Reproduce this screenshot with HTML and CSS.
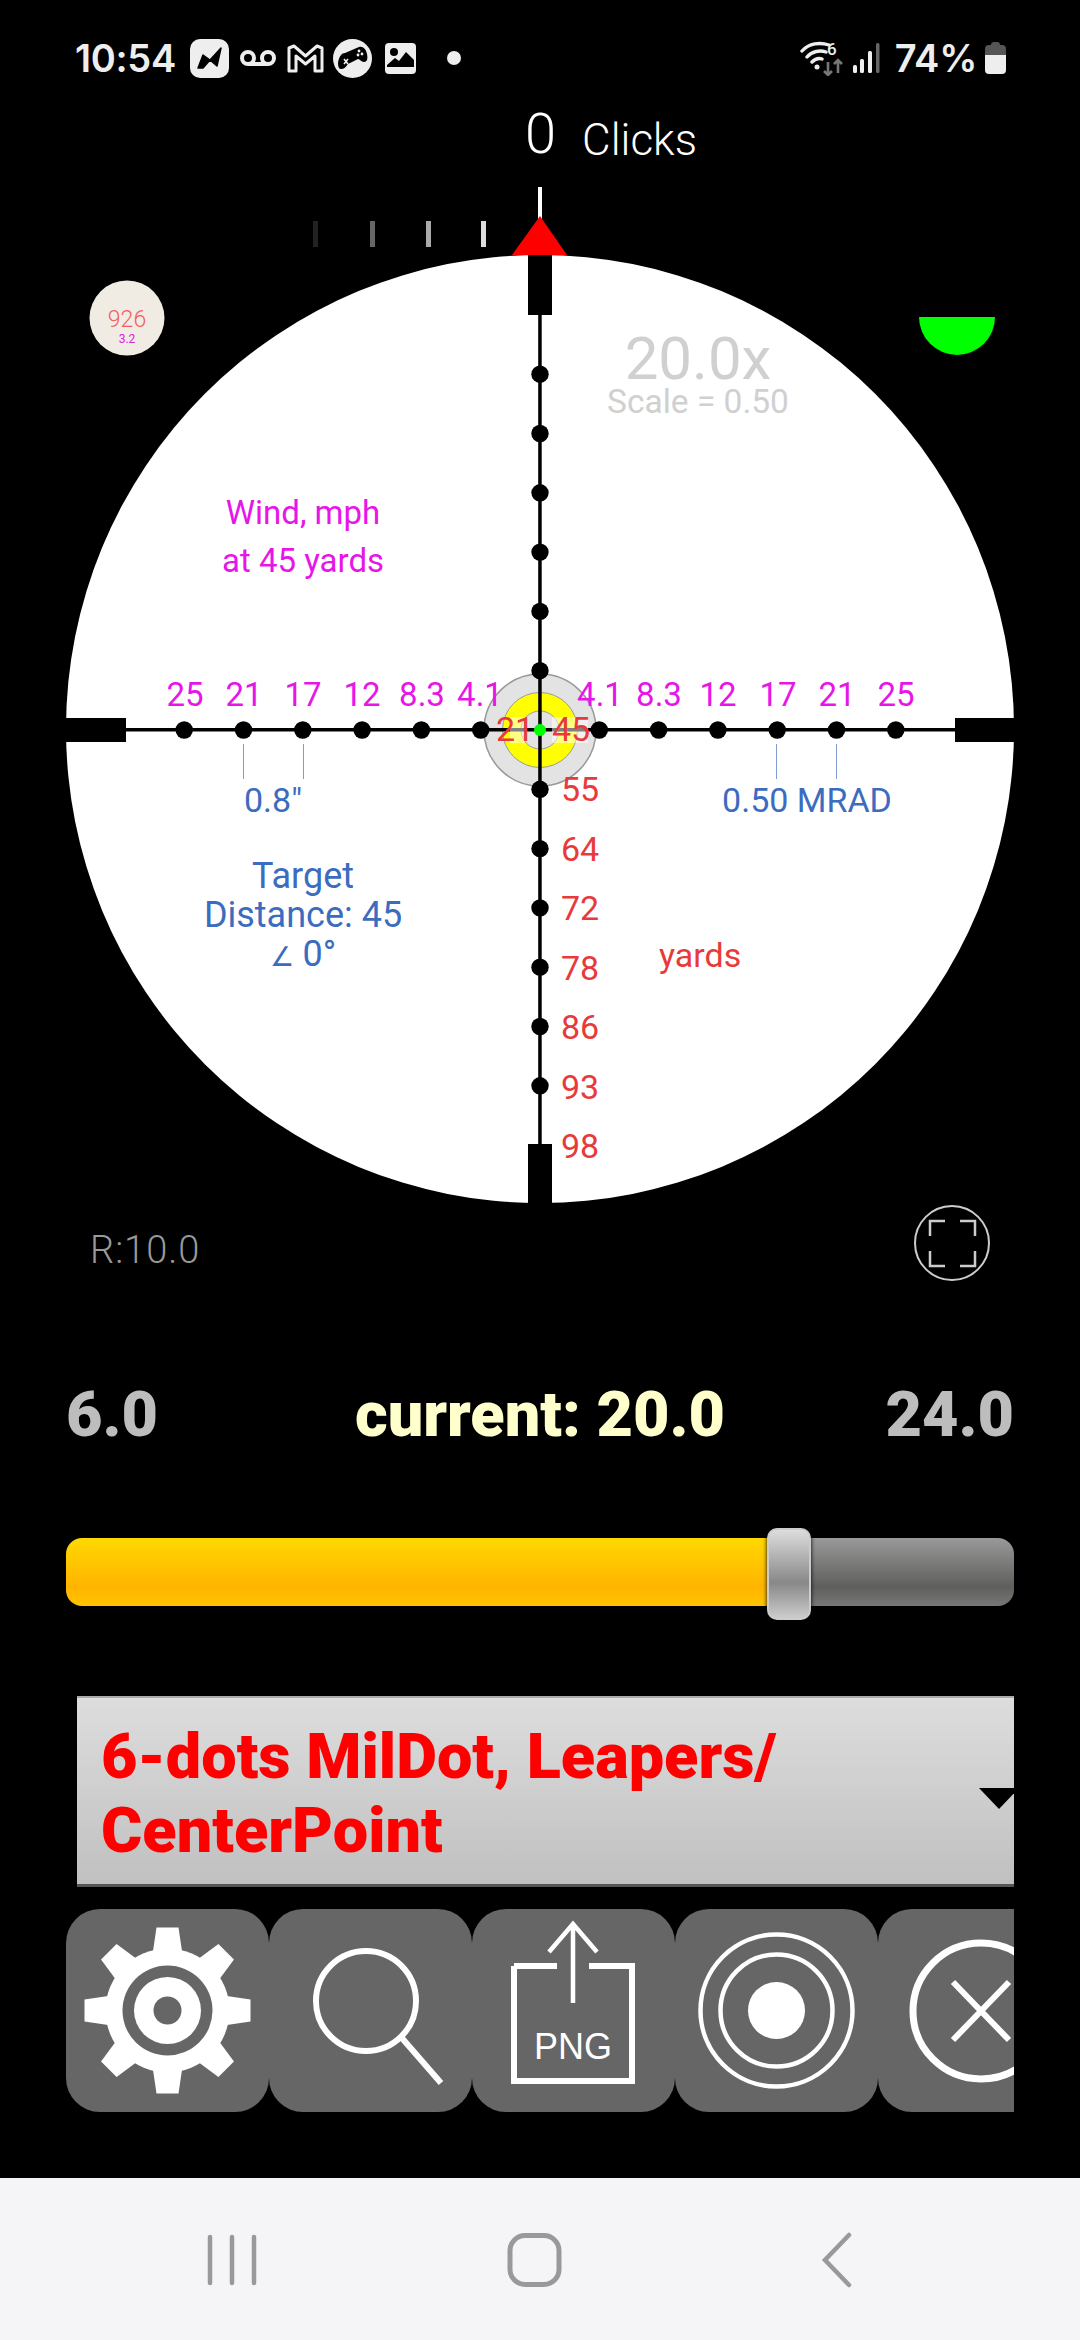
FILE: index.html
```html
<!DOCTYPE html>
<html>

<head>
    <meta charset="utf-8">
    <link rel="stylesheet" href="styles.css">
    <title>Scope</title>
</head>

<body>
    <div class="app">

        <!-- status bar -->
        <div class="status">
            <div class="status-left">
                <span class="time">10:54</span>
                <svg class="ic ic-n" width="39" height="39" viewBox="0 0 39 39">
                    <rect width="39" height="39" rx="10" fill="#eee" />
                    <path d="M8 29 L13 16 L20 21 L31 9 L27 27 L20 21 L13 29 Z" fill="#000" stroke="#000" stroke-width="1.5" stroke-linejoin="round" />
                </svg>
                <svg class="ic ic-vm" width="36" height="20" viewBox="0 0 36 20">
                    <circle cx="8" cy="10" r="6" fill="none" stroke="#eee" stroke-width="4" />
                    <circle cx="28" cy="10" r="6" fill="none" stroke="#eee" stroke-width="4" />
                    <path d="M8 16H28" stroke="#eee" stroke-width="4" />
                </svg>
                <svg class="ic ic-m" width="37" height="29" viewBox="0 0 37 29">
                    <path d="M2 4 L7 2 L18.5 12 L30 2 L35 4 V27 H28 V12 L18.5 20 L9 12 V27 H2 Z" fill="none" stroke="#eee" stroke-width="3" stroke-linejoin="round" />
                </svg>
                <svg class="ic ic-game" width="39" height="39" viewBox="0 0 39 39">
                    <circle cx="19.5" cy="19.5" r="19.5" fill="#eee" />
                    <path d="M5 24 C6 17 9 14 12 14 L26 8 C30 7 33 10 34 15 C35 20 34 23 31 23 C28 23 27 20 25 20 L15 25 C13 28 11 30 8 30 C6 30 5 28 5 24 Z" fill="#000" />
                    <path d="M11 20 L15 25 M15 20 L11 25" stroke="#eee" stroke-width="1.6" />
                    <circle cx="26" cy="12" r="1.4" fill="#eee" />
                    <circle cx="29" cy="15" r="1.4" fill="#eee" />
                    <circle cx="25" cy="16" r="1.4" fill="#eee" />
                </svg>
                <svg class="ic ic-img" width="31" height="31" viewBox="0 0 31 31">
                    <rect width="31" height="31" rx="4" fill="#eee" />
                    <circle cx="9" cy="9" r="4" fill="#000" />
                    <path d="M2 22 L10 15 L14 18 L21 9 L29 17 V24 H2 Z" fill="#000" />
                </svg>
                <span class="status-dot"></span>
            </div>
            <div class="status-right">
                <svg class="ic" width="46" height="36" viewBox="0 0 46 36">
                    <path d="M2 11 C9 3 20 2 29 5 M7 17 C12 11 20 10 26 12 M12 22 C15 19 19 18 22 19" fill="none" stroke="#eee" stroke-width="3.4" stroke-linecap="round" />
                    <circle cx="17" cy="27" r="2.5" fill="#eee" />
                    <path d="M28 22V35 M24 31L28 35L32 31" fill="none" stroke="#777" stroke-width="2.6" />
                    <path d="M38 33V20 M34 24L38 20L42 24" fill="none" stroke="#777" stroke-width="2.6" />
                    <text class="wifi-six" x="27" y="15">6</text>
                </svg>
                <svg class="ic signal" width="27" height="30" viewBox="0 0 27 30">
                    <rect x="0" y="22" width="4" height="8" rx="1.5" fill="#eee" />
                    <rect x="7" y="16" width="4" height="14" rx="1.5" fill="#eee" />
                    <rect x="15" y="8" width="4" height="22" rx="1.5" fill="#eee" />
                    <rect x="23" y="0" width="3.5" height="30" rx="1.5" fill="#666" />
                </svg>
                <span class="percent">74%</span>
                <svg class="ic ic-batt" width="21" height="32" viewBox="0 0 21 32">
                    <path d="M6 3 Q6 0 9 0 H12 Q15 0 15 3 H17 Q21 3 21 7 V13 H0 V7 Q0 3 4 3 Z" fill="#555" />
                    <path d="M0 13 H21 V28 Q21 32 17 32 H4 Q0 32 0 28 Z" fill="#eee" />
                </svg>
            </div>
        </div>

        <div class="clicks"><span class="clicks-num">0</span><span class="clicks-label">Clicks</span></div>

        <!-- scope view, viewBox keeps screen coordinates -->
        <svg class="scope" width="1080" height="1120" viewBox="0 170 1080 1120">
            <rect class="wht" x="538" y="187" width="4" height="32" />
            <rect x="313" y="221" width="5" height="26" fill="#222" />
            <rect x="370" y="221" width="5" height="26" fill="#666" />
            <rect x="426" y="221" width="5" height="26" fill="#aaa" />
            <rect x="481" y="221" width="5" height="26" fill="#ddd" />
            <polygon points="540,216 567,255 512,255" fill="#f00" />

            <circle class="wht" cx="540" cy="729" r="474" />

            <!-- badge and level -->
            <circle cx="127" cy="318" r="37.5" fill="#f0ece4" />
            <text class="badge-top" x="127" y="327">926</text>
            <text class="badge-sub" x="127" y="343">3.2</text>
            <path d="M919 317 H995 A38 38 0 0 1 919 317 Z" fill="#0f0" />

            <text class="power" x="698" y="379">20.0x</text>
            <text class="scale" x="698" y="413">Scale = 0.50</text>

            <!-- center target -->
            <circle cx="540" cy="730" r="56" fill="#e3e3e3" stroke="#999" stroke-width="1.5" />
            <circle cx="540" cy="730" r="37.5" fill="#ff0" stroke="#999" stroke-width="1" />
            <circle cx="540" cy="730" r="19" fill="#e3e3e3" stroke="#999" stroke-width="1" />

            <!-- crosshair -->
            <rect x="66" y="728" width="948" height="3.5" />
            <rect x="538.2" y="255" width="3.5" height="948" />
            <rect x="528" y="255" width="24" height="60" />
            <rect x="528" y="1144" width="24" height="60" />
            <rect x="66" y="718" width="60" height="24" />
            <rect x="955" y="718" width="59" height="24" />

            <!-- dots -->
            <circle cx="184.200" cy="730" r="8.7" />
            <circle cx="243.500" cy="730" r="8.7" />
            <circle cx="302.800" cy="730" r="8.7" />
            <circle cx="362.100" cy="730" r="8.7" />
            <circle cx="421.400" cy="730" r="8.7" />
            <circle cx="480.700" cy="730" r="8.7" />
            <circle cx="599.300" cy="730" r="8.7" />
            <circle cx="658.600" cy="730" r="8.7" />
            <circle cx="717.900" cy="730" r="8.7" />
            <circle cx="777.200" cy="730" r="8.7" />
            <circle cx="836.500" cy="730" r="8.7" />
            <circle cx="895.800" cy="730" r="8.7" />
            <circle cx="540" cy="374.200" r="8.7" />
            <circle cx="540" cy="433.500" r="8.7" />
            <circle cx="540" cy="492.800" r="8.7" />
            <circle cx="540" cy="552.100" r="8.7" />
            <circle cx="540" cy="611.400" r="8.7" />
            <circle cx="540" cy="670.700" r="8.7" />
            <circle cx="540" cy="789.300" r="8.7" />
            <circle cx="540" cy="848.600" r="8.7" />
            <circle cx="540" cy="907.900" r="8.7" />
            <circle cx="540" cy="967.200" r="8.7" />
            <circle cx="540" cy="1026.500" r="8.7" />
            <circle cx="540" cy="1085.800" r="8.7" />
            <circle cx="540" cy="730" r="6" fill="#0f0" />

            <!-- wind -->
            <text class="mag mid" x="303" y="524">Wind, mph</text>
            <text class="mag mid" x="303" y="572">at 45 yards</text>
            <text class="mag mid" x="185" y="706">25</text>
            <text class="mag mid" x="244" y="706">21</text>
            <text class="mag mid" x="303" y="706">17</text>
            <text class="mag mid" x="362" y="706">12</text>
            <text class="mag mid" x="422" y="706">8.3</text>
            <text class="mag mid" x="480" y="706">4.1</text>
            <text class="mag mid" x="600" y="706">4.1</text>
            <text class="mag mid" x="659" y="706">8.3</text>
            <text class="mag mid" x="718" y="706">12</text>
            <text class="mag mid" x="778" y="706">17</text>
            <text class="mag mid" x="837" y="706">21</text>
            <text class="mag mid" x="896" y="706">25</text>

            <!-- scale marks -->
            <rect class="tick" x="243" y="744" width="1" height="35" />
            <rect class="tick" x="303" y="744" width="1" height="35" />
            <rect class="tick" x="776" y="744" width="1" height="35" />
            <rect class="tick" x="836" y="744" width="1" height="35" />
            <text class="blue mid" x="273" y="812">0.8"</text>
            <text class="blue mid" x="807" y="812">0.50 MRAD</text>
            <text class="blue big mid" x="303" y="888">Target</text>
            <text class="blue big mid" x="303" y="927">Distance: 45</text>
            <text class="blue big mid" x="303" y="966"><tspan class="angle">∠</tspan> 0°</text>

            <!-- range -->
            <rect class="veil" x="510" y="717" width="15" height="26" />
            <rect class="veil" x="552" y="717" width="36" height="26" />
            <text class="red" x="496" y="741">21</text>
            <text class="red" x="552" y="741">45</text>
            <text class="red" x="561" y="801">55</text>
            <text class="red" x="561" y="861">64</text>
            <text class="red" x="561" y="920">72</text>
            <text class="red" x="561" y="980">78</text>
            <text class="red" x="561" y="1039">86</text>
            <text class="red" x="561" y="1099">93</text>
            <text class="red" x="561" y="1158">98</text>
            <text class="red" x="659" y="967">yards</text>

            <text class="reticle-r" x="90" y="1263">R:10.0</text>

            <!-- fullscreen button -->
            <circle cx="952" cy="1243" r="37" fill="none" stroke="#ccc" stroke-width="2" />
            <path class="corners" d="M930 1236V1221H945 M960 1221H975V1236 M930 1251V1266H945 M960 1266H975V1251" />
        </svg>

        <div class="power-row">
            <span class="power-end">6.0</span>
            <span class="power-now">current: 20.0</span>
            <span class="power-end power-max">24.0</span>
        </div>

        <div class="slider">
            <div class="slider-fill"></div>
            <div class="slider-rest"></div>
            <div class="slider-thumb"></div>
        </div>

        <div class="select">
            <div class="select-text">6-dots MilDot, Leapers/<br>CenterPoint</div>
            <div class="select-arrow"></div>
        </div>

        <div class="tools">
            <div class="tool">
                <svg width="203" height="203" viewBox="-101.500 -101.500 203 203">
                    <g fill="#fff">
                        <circle r="62" />
                        <polygon points="-11,-83 11,-83 15,-56 -15,-56" />
                        <polygon points="-11,-83 11,-83 15,-56 -15,-56" transform="rotate(45)" />
                        <polygon points="-11,-83 11,-83 15,-56 -15,-56" transform="rotate(90)" />
                        <polygon points="-11,-83 11,-83 15,-56 -15,-56" transform="rotate(135)" />
                        <polygon points="-11,-83 11,-83 15,-56 -15,-56" transform="rotate(180)" />
                        <polygon points="-11,-83 11,-83 15,-56 -15,-56" transform="rotate(225)" />
                        <polygon points="-11,-83 11,-83 15,-56 -15,-56" transform="rotate(270)" />
                        <polygon points="-11,-83 11,-83 15,-56 -15,-56" transform="rotate(315)" />
                    </g>
                    <circle r="45" fill="#666" />
                    <circle r="33.500" fill="#fff" />
                    <circle r="14" fill="#666" />
                </svg>
            </div>
            <div class="tool">
                <svg width="203" height="203" viewBox="0 0 203 203">
                    <circle class="line" cx="97" cy="92" r="50" stroke-width="6" />
                    <path class="line" d="M132 128 L172 174" stroke-width="6" />
                </svg>
            </div>
            <div class="tool">
                <svg width="203" height="203" viewBox="0 0 203 203">
                    <path class="line" d="M42 57 H85 M117 57 H160 V172 H42 V57" stroke-width="6" />
                    <path class="line" d="M101 16 V94 M77 43 L101 15 L125 43" stroke-width="4.500" />
                    <text class="png" x="101" y="150">PNG</text>
                </svg>
            </div>
            <div class="tool">
                <svg width="203" height="203" viewBox="-101.500 -101.500 203 203">
                    <circle class="line" r="76" stroke-width="4.500" />
                    <circle class="line" r="56" stroke-width="4.500" />
                    <circle r="28.500" fill="#fff" />
                </svg>
            </div>
            <div class="tool">
                <svg width="203" height="203" viewBox="0 0 203 203">
                    <circle class="line" cx="103" cy="102" r="68" stroke-width="7" />
                    <path class="line" d="M75 73 L131 131 M131 73 L75 131" stroke-width="6" />
                </svg>
            </div>
        </div>

        <!-- android nav -->
        <div class="nav">
            <svg width="1080" height="162" viewBox="0 2178 1080 162">
                <path class="nav-line" d="M210 2237V2283 M232 2237V2283 M254 2237V2283" stroke-width="4.500" />
                <rect class="nav-line" x="510" y="2235.500" width="49" height="49" rx="15" stroke-width="5" />
                <path class="nav-line" d="M849 2235 L825 2260 L849 2285" stroke-width="4.500" />
            </svg>
        </div>
    </div>
</body>

</html>
```

FILE: styles.css
```css
html, body {
    margin: 0;
    padding: 0;
    background: #000;
}

.app {
    width: 1080px;
    height: 2340px;
    display: flex;
    flex-direction: column;
    overflow: hidden;
    font-family: Roboto, sans-serif;
    color: #fff;
}

/* status bar */
.status {
    height: 96px;
    flex: none;
    padding: 20px 74px 0 75px;
    box-sizing: border-box;
    display: flex;
    justify-content: space-between;
    align-items: center;
}

.status-left, .status-right {
    display: flex;
    align-items: center;
}

.ic {
    display: block;
    margin-left: 11px;
}

.ic-n {
    margin-left: 14px;
}

.ic-game {
    margin-left: 9px;
}

.ic-img {
    margin-left: 13px;
}

.ic-batt {
    margin-left: 8px;
}

.time, .percent {
    font-family: Inter, sans-serif;
    font-size: 38px;
    font-weight: 600;
    letter-spacing: -0.3px;
    color: #eee;
}

.percent {
    margin-left: 15px;
}

.signal {
    margin-left: 7px;
}

.status-dot {
    width: 14px;
    height: 14px;
    border-radius: 50%;
    background: #eee;
    margin-left: 31px;
}

.wifi-six {
    font-family: Roboto, sans-serif;
    font-size: 17px;
    font-weight: 500;
    fill: #eee;
}

/* clicks */
.clicks {
    height: 74px;
    flex: none;
    padding-left: 525px;
    display: flex;
    align-items: flex-start;
    font-weight: 300;
}

.clicks-num {
    font-size: 56px;
    line-height: 60px;
    margin-top: 8px;
}

.clicks-label {
    font-size: 44px;
    line-height: 60px;
    margin-left: 26px;
    margin-top: 14px;
}

/* scope */
.scope {
    display: block;
    flex: none;
    font-family: Roboto, sans-serif;
}

.wht {
    fill: #fff;
}

.mid {
    text-anchor: middle;
}

.badge-top {
    font-size: 23px;
    font-weight: 300;
    fill: #f26060;
    text-anchor: middle;
}

.badge-sub {
    font-size: 12px;
    fill: #e020e0;
    text-anchor: middle;
}

.power {
    font-size: 60px;
    fill: #d0d0d0;
    text-anchor: middle;
}

.scale {
    font-size: 33.500px;
    fill: #d0d0d0;
    text-anchor: middle;
}

.mag {
    font-size: 33px;
    fill: #e815e8;
}

.blue {
    font-size: 34px;
    fill: #3c6cbf;
}

.big {
    font-size: 36px;
}

.angle {
    font-size: 27px;
}

.red {
    font-size: 34px;
    fill: #e83a3a;
}

.tick {
    fill: #7f9cd2;
}

.veil {
    fill: rgba(255, 255, 255, 0.5);
}

.reticle-r {
    font-size: 38px;
    font-weight: 300;
    letter-spacing: 1px;
    fill: #999;
}

.corners {
    fill: none;
    stroke: #ccc;
    stroke-width: 2.5;
}

/* power labels */
.power-row {
    margin-top: 87px;
    height: 76px;
    flex: none;
    padding: 0 66px;
    display: grid;
    grid-template-columns: 1fr auto 1fr;
    align-items: center;
    font-size: 63px;
    font-weight: 900;
    line-height: 76px;
}

.power-end {
    color: #bdbdbd;
}

.power-max {
    text-align: right;
}

.power-now {
    color: #ffc;
}

/* slider */
.slider {
    margin: 85px 66px 0;
    height: 68px;
    flex: none;
    display: flex;
    position: relative;
}

.slider-fill {
    width: 705px;
    border-radius: 16px 0 0 16px;
    background: linear-gradient(#ffd800, #ffb400 72%, #ffc400);
}

.slider-rest {
    flex: 1;
    border-radius: 0 16px 16px 0;
    background: linear-gradient(#999, #5f605c 72%, #777);
}

.slider-thumb {
    position: absolute;
    left: 701px;
    top: -10px;
    width: 44px;
    height: 92px;
    border-radius: 10px;
    box-sizing: border-box;
    border: 2px solid #ccc;
    background: linear-gradient(#ddd, #888 60%, #ccc);
    box-shadow: 0 0 4px #000;
}

/* dropdown */
.select {
    margin: 90px 66px 0 77px;
    height: 191px;
    flex: none;
    box-sizing: border-box;
    position: relative;
    overflow: hidden;
    padding: 22px 0 0 24px;
    background: linear-gradient(#ddd, #c0c0c0);
    border-top: 2px solid #aaa;
    border-bottom: 3px solid #555;
}

.select-text {
    font-size: 63px;
    font-weight: 900;
    line-height: 74px;
    color: #f00;
}

.select-arrow {
    position: absolute;
    right: -5px;
    top: 90px;
    border-left: 20px solid transparent;
    border-right: 20px solid transparent;
    border-top: 21px solid #000;
}

/* tool buttons */
.tools {
    margin: 22px 66px 0;
    height: 203px;
    flex: none;
    display: flex;
    overflow: hidden;
}

.tool {
    flex: none;
    width: 203px;
    height: 203px;
    border-radius: 34px;
    background: #666;
}

.tool svg {
    display: block;
}

.line {
    fill: none;
    stroke: #fff;
}

.png {
    font-family: "Liberation Sans", sans-serif;
    font-size: 36px;
    fill: #fff;
    text-anchor: middle;
}

/* nav */
.nav {
    margin-top: auto;
    height: 162px;
    flex: none;
    background: #f5f5f8;
}

.nav svg {
    display: block;
}

.nav-line {
    fill: none;
    stroke: #999;
    stroke-linecap: round;
}
```
